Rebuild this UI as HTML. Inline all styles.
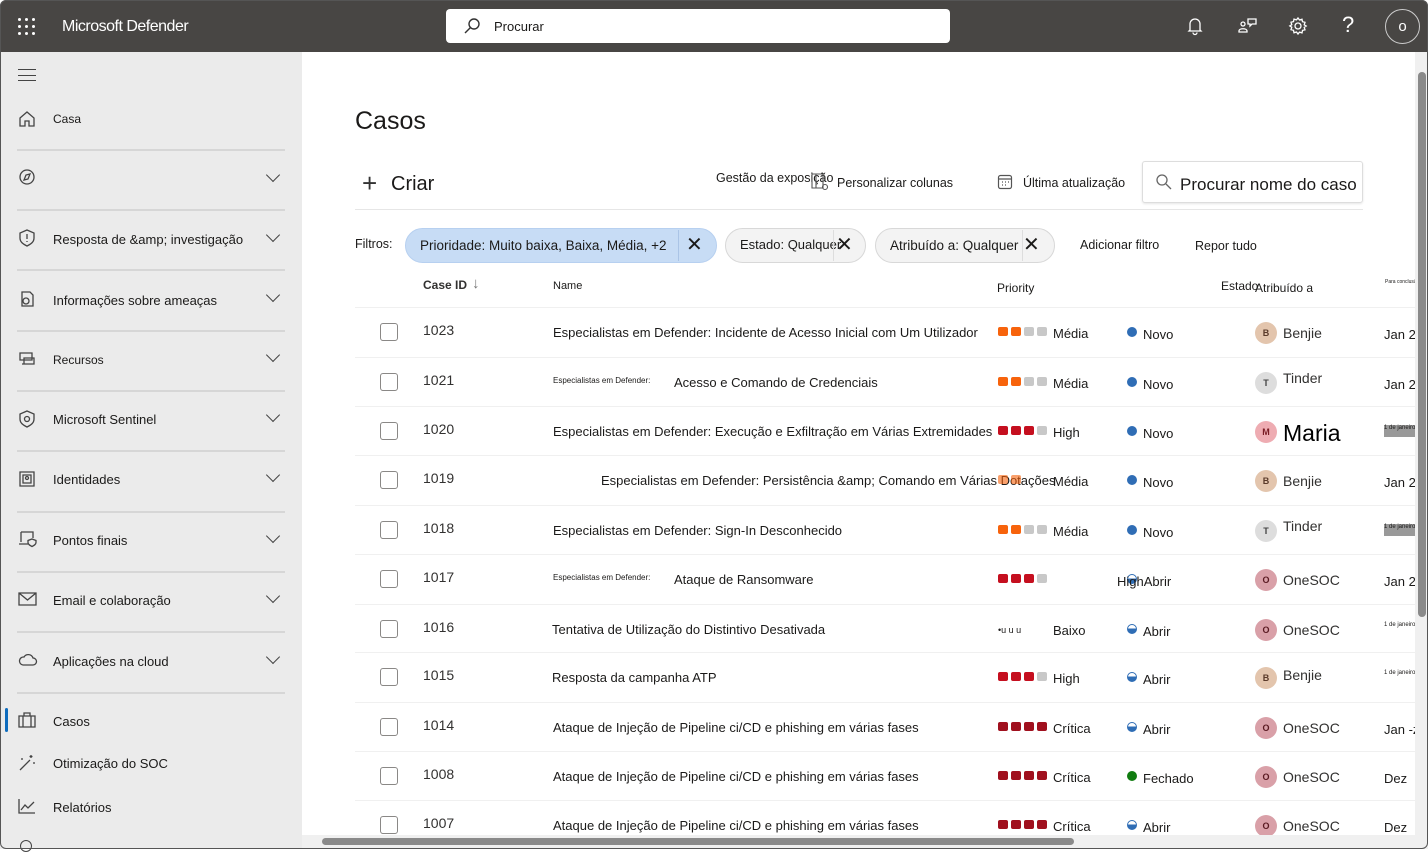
<!DOCTYPE html>
<html><head><meta charset="utf-8"><style>
*{box-sizing:border-box;margin:0;padding:0}
body{width:1428px;height:849px;overflow:hidden;font-family:"Liberation Sans",sans-serif;color:#1b1a19;background:#fff;position:relative}
.a{position:absolute;white-space:nowrap}
.top{position:absolute;left:0;top:0;width:1428px;height:52px;background:#484644;border-radius:6px 6px 0 0}
.side{position:absolute;left:0;top:52px;width:302px;height:797px;background:#ebebeb}
.nav{position:absolute;left:53px;font-size:13px;color:#1b1a19}
.sep{position:absolute;left:17px;width:268px;height:2px;background:#d6d6d6}
.chev{position:absolute;left:268px;width:10px;height:10px;border-right:1.5px solid #444;border-bottom:1.5px solid #444;transform:rotate(45deg)}
.ic{position:absolute;left:18px}
.row{position:absolute;left:355px;width:1060px;height:49px;border-top:1px solid #f0f0f0}
.row>*{position:absolute;white-space:nowrap}
.cb{left:25px;top:15px;width:18px;height:18px;border:1.5px solid #8a8886;border-radius:3px}
.id{left:68px;top:14px;font-size:14px;color:#323130}
.nm{left:198px;top:17px;font-size:13px}
.sq{top:19px;width:10px;height:9px;border-radius:2px}
.pt{left:698px;top:18px;font-size:13px}
.dot{left:772px;top:19px;width:10px;height:10px;border-radius:50%;background:#2f6db5}
.half{background:linear-gradient(#fff 45%,#2f6db5 45%);border:1px solid #2f6db5}
.st{left:788px;top:19px;font-size:13px}
.av{left:900px;top:14px;width:22px;height:22px;border-radius:50%;font-size:9px;font-weight:bold;text-align:center;line-height:22px;color:#5a3a2a}
.an{left:928px;top:17px;font-size:14px;color:#323130}
.dt{left:1029px;top:19px;font-size:13px}
.chip{position:absolute;top:228px;height:35px;border-radius:18px;border:1px solid #d8d8d8;background:#f3f3f3;font-size:13px;padding:9px 14px}
.frame{position:absolute;left:0;top:0;width:1428px;height:849px;border:1px solid #555;border-radius:6px;pointer-events:none}
</style></head><body>
<div class="top"></div>
<div class="a" style="left:18px;top:18px;width:18px;height:18px;display:grid;grid-template-columns:repeat(3,4px);gap:3px">
<i style="width:3px;height:3px;background:#fff;border-radius:50%"></i><i style="width:3px;height:3px;background:#fff;border-radius:50%"></i><i style="width:3px;height:3px;background:#fff;border-radius:50%"></i><i style="width:3px;height:3px;background:#fff;border-radius:50%"></i><i style="width:3px;height:3px;background:#fff;border-radius:50%"></i><i style="width:3px;height:3px;background:#fff;border-radius:50%"></i><i style="width:3px;height:3px;background:#fff;border-radius:50%"></i><i style="width:3px;height:3px;background:#fff;border-radius:50%"></i><i style="width:3px;height:3px;background:#fff;border-radius:50%"></i></div>
<div class="a" style="left:62px;top:18px;font-size:16px;color:#fff;letter-spacing:-0.5px">Microsoft Defender</div>
<div class="a" style="left:446px;top:9px;width:504px;height:34px;background:#fff;border-radius:4px"></div>
<svg class="a" style="left:462px;top:17px" width="20" height="20" viewBox="0 0 20 20" fill="none" stroke="#333" stroke-width="1.4"><circle cx="12" cy="7" r="5"/><path d="M8.5 10.5 3 16"/></svg>
<div class="a" style="left:494px;top:19px;font-size:13px">Procurar</div>
<svg class="a" style="left:1185px;top:16px" width="20" height="20" viewBox="0 0 20 20" fill="none" stroke="#fff" stroke-width="1.3"><path d="M5 14V8a5 5 0 0 1 10 0v6l1 1H4z M8 16.5a2 2 0 0 0 4 0"/></svg>
<svg class="a" style="left:1237px;top:16px" width="22" height="20" viewBox="0 0 22 20" fill="none" stroke="#fff" stroke-width="1.3"><circle cx="6" cy="8" r="2"/><path d="M2 15c0-3 8-3 8 0v1H2z"/><path d="M11 3h8v5h-4l-2 2V8h-2z"/></svg>
<svg class="a" style="left:1288px;top:16px" width="20" height="20" viewBox="0 0 20 20" fill="none" stroke="#fff" stroke-width="1.3"><circle cx="10" cy="10" r="3"/><path d="M10 2l1.5 2 2.5-.8.5 2.5 2.5.6-.8 2.5 2 1.2-2 1.4.8 2.4-2.5.6-.5 2.5-2.5-.8L10 18l-1.5-2-2.5.8-.5-2.5-2.5-.6.8-2.4-2-1.4 2-1.2-.8-2.5 2.5-.6.5-2.5 2.5.8z"/></svg>
<div class="a" style="left:1342px;top:12px;font-size:22px;color:#fff">?</div>
<div class="a" style="left:1385px;top:9px;width:35px;height:35px;border:1px solid #ccc;border-radius:50%;color:#fff;font-size:15px;text-align:center;line-height:33px">o</div>

<div class="side"></div>
<div class="a" style="left:18px;top:69px;width:18px;height:12px;border-top:1.5px solid #444;border-bottom:1.5px solid #444"></div>
<div class="a" style="left:18px;top:74.5px;width:18px;height:1.5px;background:#444"></div>
<svg class="ic" style="top:110px" width="18" height="18" viewBox="0 0 18 18" fill="none" stroke="#444" stroke-width="1.3"><path d="M2 8l7-6 7 6v8h-5v-5H7v5H2z"/></svg>
<div class="nav" style="top:112px;font-size:12px">Casa</div>
<div class="sep" style="top:149px"></div>
<svg class="ic" style="top:168px" width="18" height="18" viewBox="0 0 18 18" fill="none" stroke="#444" stroke-width="1.3"><circle cx="9" cy="9" r="7"/><path d="M6 12l2-5 4-1-2 5z"/></svg>
<div class="chev" style="top:170px"></div>
<div class="sep" style="top:209px"></div>
<svg class="ic" style="top:229px" width="18" height="18" viewBox="0 0 18 18" fill="none" stroke="#444" stroke-width="1.3"><path d="M9 1l7 3v5c0 4-3 6-7 8-4-2-7-4-7-8V4z M9 5v5 M9 12v1"/></svg>
<div class="nav" style="top:232px">Resposta de &amp;amp; investigação</div><div class="chev" style="top:230px"></div>
<div class="sep" style="top:269px"></div>
<svg class="ic" style="top:290px" width="18" height="18" viewBox="0 0 18 18" fill="none" stroke="#444" stroke-width="1.3"><path d="M4 2h8l3 3v11H4z"/><circle cx="8" cy="11" r="3"/></svg>
<div class="nav" style="top:293px">Informações sobre ameaças</div><div class="chev" style="top:290px"></div>
<div class="sep" style="top:330px"></div>
<svg class="ic" style="top:351px" width="18" height="16" viewBox="0 0 18 16" fill="none" stroke="#444" stroke-width="1.3"><path d="M2 2h12v7H2z M6 7h10v6H6z M4 13h4"/></svg>
<div class="nav" style="top:353px;font-size:12px">Recursos</div><div class="chev" style="top:350px"></div>
<div class="sep" style="top:390px"></div>
<svg class="ic" style="top:410px" width="18" height="18" viewBox="0 0 18 18" fill="none" stroke="#444" stroke-width="1.3"><path d="M9 1l7 3v5c0 4-3 6-7 8-4-2-7-4-7-8V4z"/><circle cx="9" cy="9" r="2.5"/></svg>
<div class="nav" style="top:412px">Microsoft Sentinel</div><div class="chev" style="top:410px"></div>
<div class="sep" style="top:450px"></div>
<svg class="ic" style="top:470px" width="18" height="18" viewBox="0 0 18 18" fill="none" stroke="#444" stroke-width="1.3"><path d="M2 2h14v14H2z M5 5h8v8H5z"/><circle cx="9" cy="8" r="1.5"/></svg>
<div class="nav" style="top:472px">Identidades</div><div class="chev" style="top:470px"></div>
<div class="sep" style="top:511px"></div>
<svg class="ic" style="top:530px" width="20" height="18" viewBox="0 0 20 18" fill="none" stroke="#444" stroke-width="1.3"><path d="M3 2h12v6 M3 2v10 M1 14h9"/><path d="M14 9l4 1.5v2c0 2-2 3-4 4-2-1-4-2-4-4v-2z"/></svg>
<div class="nav" style="top:533px">Pontos finais</div><div class="chev" style="top:531px"></div>
<div class="sep" style="top:571px"></div>
<svg class="ic" style="top:592px" width="20" height="14" viewBox="0 0 20 14" fill="none" stroke="#444" stroke-width="1.3"><path d="M1 1h17v12H1z M1 1l8.5 7L18 1"/></svg>
<div class="nav" style="top:593px">Email e colaboração</div><div class="chev" style="top:591px"></div>
<div class="sep" style="top:631px"></div>
<svg class="ic" style="top:653px" width="20" height="14" viewBox="0 0 20 14" fill="none" stroke="#444" stroke-width="1.3"><path d="M5 12h10a3.5 3.5 0 0 0 0-7 5 5 0 0 0-9-1A4 4 0 0 0 5 12z"/></svg>
<div class="nav" style="top:654px">Aplicações na cloud</div><div class="chev" style="top:652px"></div>
<div class="sep" style="top:692px"></div>
<div class="a" style="left:5px;top:708px;width:3px;height:24px;background:#0f6cbd;border-radius:2px"></div>
<svg class="ic" style="top:712px" width="18" height="16" viewBox="0 0 18 16" fill="none" stroke="#444" stroke-width="1.3"><path d="M1 4h16v11H1z M6 4V1h6v3 M5 4v11 M13 4v11"/></svg>
<div class="nav" style="top:714px">Casos</div>
<svg class="ic" style="top:754px" width="18" height="18" viewBox="0 0 18 18" fill="none" stroke="#444" stroke-width="1.3"><path d="M2 16L12 6 M13 1v3 M11.5 2.5h3 M16 8v2 M4 4v2"/></svg>
<div class="nav" style="top:756px">Otimização do SOC</div>
<svg class="ic" style="top:798px" width="18" height="16" viewBox="0 0 18 16" fill="none" stroke="#444" stroke-width="1.3"><path d="M1 1v14h16 M3 12l4-5 3 3 6-6"/></svg>
<div class="nav" style="top:800px">Relatórios</div>
<div class="a" style="left:20px;top:840px;width:12px;height:12px;border:1.3px solid #444;border-radius:50%"></div>

<div class="a" style="left:355px;top:107px;font-size:25px">Casos</div>
<div class="a" style="left:362px;top:168px;font-size:26px;font-weight:200;color:#333">+</div>
<div class="a" style="left:391px;top:173px;font-size:20px">Criar</div>
<div class="a" style="left:716px;top:171px;font-size:12.5px">Gestão da exposição</div>
<svg class="a" style="left:810px;top:172px" width="20" height="20" viewBox="0 0 20 20" fill="none" stroke="#555" stroke-width="1.1"><path d="M2 2h11v14H2z M6 2v14"/><circle cx="15" cy="15" r="2.5"/></svg>
<div class="a" style="left:837px;top:176px;font-size:12.5px">Personalizar colunas</div>
<svg class="a" style="left:997px;top:174px" width="16" height="16" viewBox="0 0 16 16" fill="none" stroke="#555" stroke-width="1.2"><rect x="1.5" y="1.5" width="13" height="13" rx="2"/><path d="M1.5 5h13 M5 8h1 M8 8h1 M11 8h1 M5 11h1 M8 11h1"/></svg>
<div class="a" style="left:1023px;top:176px;font-size:12.5px">Última atualização</div>
<div class="a" style="left:1142px;top:161px;width:221px;height:42px;border:1px solid #ddd;border-radius:3px;box-shadow:0 1px 2px rgba(0,0,0,.1)"></div>
<svg class="a" style="left:1155px;top:173px" width="18" height="18" viewBox="0 0 18 18" fill="none" stroke="#666" stroke-width="1.3"><circle cx="7" cy="7" r="5"/><path d="M11 11l5 5"/></svg>
<div class="a" style="left:1180px;top:175px;font-size:17px">Procurar nome do caso</div>
<div class="a" style="left:355px;top:209px;width:1008px;height:1px;background:#e6e6e6"></div>

<div class="a" style="left:355px;top:237px;font-size:12.5px">Filtros:</div>
<div class="chip" style="left:405px;width:312px;background:#c7dcf5;border-color:#b7d0f0;font-size:13.5px">Prioridade: Muito baixa, Baixa, Média, +2</div>
<div class="a" style="left:678px;top:230px;width:1px;height:31px;background:#aac4e6"></div>
<div class="a" style="left:686px;top:232px;font-size:20px;font-weight:300">✕</div>
<div class="chip" style="left:725px;width:141px;padding-top:8px">Estado: Qualquer</div>
<div class="a" style="left:833px;top:230px;width:1px;height:31px;background:#ddd"></div>
<div class="a" style="left:836px;top:232px;font-size:20px;font-weight:300">✕</div>
<div class="chip" style="left:875px;width:180px;font-size:13.5px">Atribuído a: Qualquer</div>
<div class="a" style="left:1022px;top:230px;width:1px;height:31px;background:#ddd"></div>
<div class="a" style="left:1023px;top:232px;font-size:20px;font-weight:300">✕</div>
<div class="a" style="left:1080px;top:238px;font-size:12.5px">Adicionar filtro</div>
<div class="a" style="left:1195px;top:239px;font-size:12.5px">Repor tudo</div>

<div class="a" style="left:423px;top:278px;font-size:12px;font-weight:bold;color:#323130">Case ID</div>
<div class="a" style="left:472px;top:275px;font-size:15px;color:#777">↓</div>
<div class="a" style="left:553px;top:280px;font-size:11px">Name</div>
<div class="a" style="left:997px;top:281px;font-size:12px">Priority</div>
<div class="a" style="left:1221px;top:279px;font-size:12px">Estado</div>
<div class="a" style="left:1255px;top:281px;font-size:12px">Atribuído a</div>
<div class="a" style="left:1385px;top:279px;font-size:5px">Para conclusão</div>

<div class="row" style="top:307px"><div class="cb"></div><div class="id">1023</div><div class="nm">Especialistas em Defender: Incidente de Acesso Inicial com Um Utilizador</div>
<div class="sq" style="left:643px;background:#f7630c"></div><div class="sq" style="left:656px;background:#f7630c"></div><div class="sq" style="left:669px;background:#c8c8c8"></div><div class="sq" style="left:682px;background:#c8c8c8"></div><div class="pt">Média</div>
<div class="dot"></div><div class="st">Novo</div><div class="av" style="background:#e3c5ad">B</div><div class="an">Benjie</div><div class="dt">Jan 2</div></div>

<div class="row" style="top:357px"><div class="cb"></div><div class="id">1021</div><div class="nm" style="font-size:8px;top:18px">Especialistas em Defender:</div><div class="nm" style="left:319px">Acesso e Comando de Credenciais</div>
<div class="sq" style="left:643px;background:#f7630c"></div><div class="sq" style="left:656px;background:#f7630c"></div><div class="sq" style="left:669px;background:#c8c8c8"></div><div class="sq" style="left:682px;background:#c8c8c8"></div><div class="pt">Média</div>
<div class="dot"></div><div class="st">Novo</div><div class="av" style="background:#ddd;color:#444">T</div><div class="an" style="top:12px">Tinder</div><div class="dt">Jan 2</div></div>

<div class="row" style="top:406px"><div class="cb"></div><div class="id">1020</div><div class="nm">Especialistas em Defender: Execução e Exfiltração em Várias Extremidades</div>
<div class="sq" style="left:643px;background:#c50f1f"></div><div class="sq" style="left:656px;background:#c50f1f"></div><div class="sq" style="left:669px;background:#c50f1f"></div><div class="sq" style="left:682px;background:#c8c8c8"></div><div class="pt">High</div>
<div class="dot"></div><div class="st">Novo</div><div class="av" style="background:#eeacb2;color:#7a1c24">M</div><div class="an" style="font-size:23px;top:13px;color:#000">Maria</div><div class="dt" style="font-size:6px;top:18px;background:#999;width:32px;height:12px">1 de janeiro</div></div>

<div class="row" style="top:455px"><div class="cb"></div><div class="id">1019</div><div class="nm" style="left:246px">Especialistas em Defender: Persistência &amp;amp; Comando em Várias Dotações</div>
<div class="sq" style="left:643px;background:#f7630c;opacity:.6"></div><div class="sq" style="left:656px;background:#f7630c;opacity:.6"></div><div class="pt">Média</div>
<div class="dot"></div><div class="st">Novo</div><div class="av" style="background:#e3c5ad">B</div><div class="an">Benjie</div><div class="dt">Jan 2</div></div>

<div class="row" style="top:505px"><div class="cb"></div><div class="id">1018</div><div class="nm">Especialistas em Defender: Sign-In Desconhecido</div>
<div class="sq" style="left:643px;background:#f7630c"></div><div class="sq" style="left:656px;background:#f7630c"></div><div class="sq" style="left:669px;background:#c8c8c8"></div><div class="sq" style="left:682px;background:#c8c8c8"></div><div class="pt">Média</div>
<div class="dot"></div><div class="st">Novo</div><div class="av" style="background:#ddd;color:#444">T</div><div class="an" style="top:12px">Tinder</div><div class="dt" style="font-size:6px;top:18px;background:#999;width:32px;height:12px">1 de janeiro</div></div>

<div class="row" style="top:554px"><div class="cb"></div><div class="id">1017</div><div class="nm" style="font-size:8px;top:18px">Especialistas em Defender:</div><div class="nm" style="left:319px">Ataque de Ransomware</div>
<div class="sq" style="left:643px;background:#c50f1f"></div><div class="sq" style="left:656px;background:#c50f1f"></div><div class="sq" style="left:669px;background:#c50f1f"></div><div class="sq" style="left:682px;background:#c8c8c8"></div>
<div class="dot half"></div><div class="st" style="left:762px">HighAbrir</div><div class="av" style="background:#d9a0a8;color:#5a1a22">O</div><div class="an">OneSOC</div><div class="dt">Jan 2</div></div>

<div class="row" style="top:604px"><div class="cb"></div><div class="id">1016</div><div class="nm" style="left:197px">Tentativa de Utilização do Distintivo Desativada</div>
<div style="left:643px;top:20px;font-size:9px">•u u u</div><div class="pt">Baixo</div>
<div class="dot half"></div><div class="st">Abrir</div><div class="av" style="background:#d9a0a8;color:#5a1a22">O</div><div class="an">OneSOC</div><div class="dt" style="font-size:6px;top:17px">1 de janeiro</div></div>

<div class="row" style="top:652px"><div class="cb"></div><div class="id">1015</div><div class="nm" style="left:197px">Resposta da campanha ATP</div>
<div class="sq" style="left:643px;background:#c50f1f"></div><div class="sq" style="left:656px;background:#c50f1f"></div><div class="sq" style="left:669px;background:#c50f1f"></div><div class="sq" style="left:682px;background:#c8c8c8"></div><div class="pt">High</div>
<div class="dot half"></div><div class="st">Abrir</div><div class="av" style="background:#e3c5ad">B</div><div class="an" style="top:14px">Benjie</div><div class="dt" style="font-size:6px;top:17px">1 de janeiro</div></div>

<div class="row" style="top:702px"><div class="cb"></div><div class="id">1014</div><div class="nm">Ataque de Injeção de Pipeline ci/CD e phishing em várias fases</div>
<div class="sq" style="left:643px;background:#a0101e"></div><div class="sq" style="left:656px;background:#a0101e"></div><div class="sq" style="left:669px;background:#a0101e"></div><div class="sq" style="left:682px;background:#a0101e"></div><div class="pt">Crítica</div>
<div class="dot half"></div><div class="st">Abrir</div><div class="av" style="background:#d9a0a8;color:#5a1a22">O</div><div class="an">OneSOC</div><div class="dt">Jan -z</div></div>

<div class="row" style="top:751px"><div class="cb"></div><div class="id">1008</div><div class="nm">Ataque de Injeção de Pipeline ci/CD e phishing em várias fases</div>
<div class="sq" style="left:643px;background:#a0101e"></div><div class="sq" style="left:656px;background:#a0101e"></div><div class="sq" style="left:669px;background:#a0101e"></div><div class="sq" style="left:682px;background:#a0101e"></div><div class="pt">Crítica</div>
<div class="dot" style="background:#107c10"></div><div class="st">Fechado</div><div class="av" style="background:#d9a0a8;color:#5a1a22">O</div><div class="an">OneSOC</div><div class="dt">Dez</div></div>

<div class="row" style="top:800px"><div class="cb"></div><div class="id">1007</div><div class="nm">Ataque de Injeção de Pipeline ci/CD e phishing em várias fases</div>
<div class="sq" style="left:643px;background:#a0101e"></div><div class="sq" style="left:656px;background:#a0101e"></div><div class="sq" style="left:669px;background:#a0101e"></div><div class="sq" style="left:682px;background:#a0101e"></div><div class="pt">Crítica</div>
<div class="dot half"></div><div class="st">Abrir</div><div class="av" style="background:#d9a0a8;color:#5a1a22">O</div><div class="an">OneSOC</div><div class="dt">Dez</div></div>

<div class="a" style="left:1415px;top:52px;width:13px;height:797px;background:#f0f0f0"></div>
<div class="a" style="left:1418px;top:72px;width:8px;height:545px;background:#8a8a8a;border-radius:4px"></div>
<div class="a" style="left:302px;top:835px;width:1113px;height:14px;background:#f0f0f0"></div>
<div class="a" style="left:322px;top:838px;width:752px;height:7px;background:#8a8a8a;border-radius:4px"></div>
<div class="frame"></div>
</body></html>
